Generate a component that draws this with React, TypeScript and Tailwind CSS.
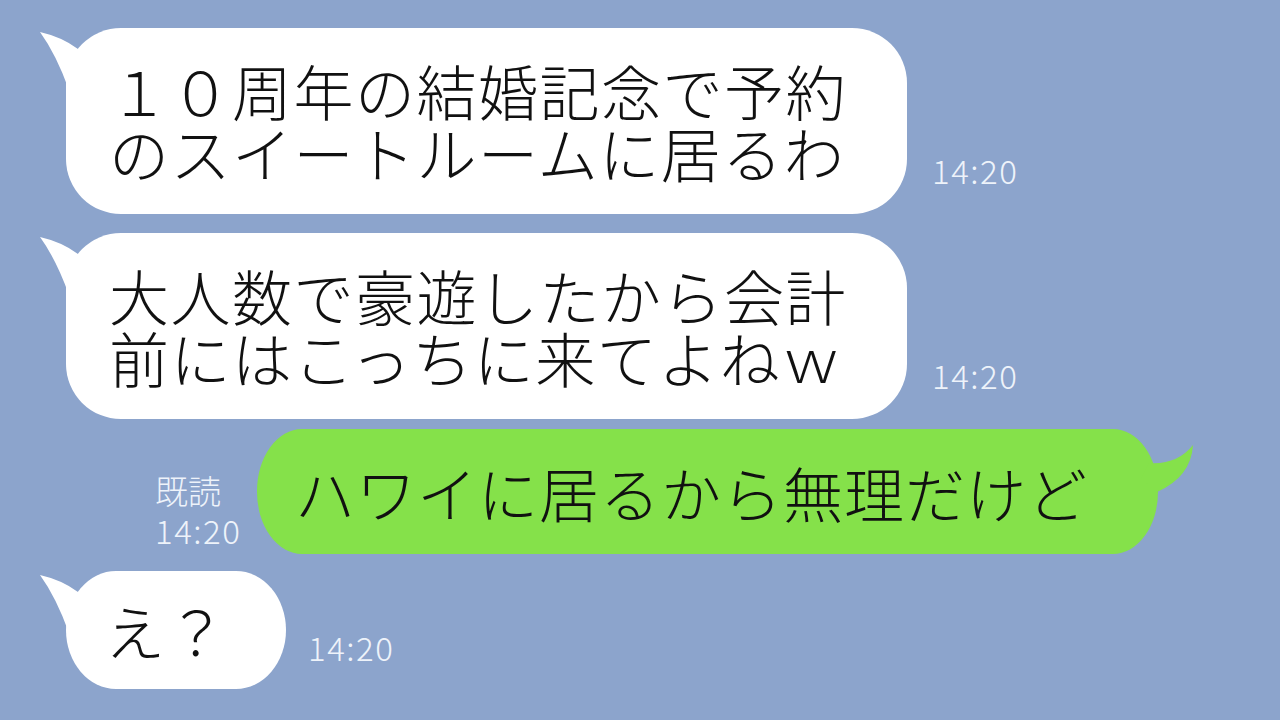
import React from 'react';

// ================================
// Chat data
// ================================

type Message = {
  id: number;
  from: 'them' | 'me';
  lines: string[];
  time: string;
};

const messages: Message[] = [
  { id: 1, from: 'them', lines: ['１０周年の結婚記念で予約', 'のスイートルームに居るわ'], time: '14:20' },
  { id: 2, from: 'them', lines: ['大人数で豪遊したから会計', '前にはこっちに来てよねｗ'], time: '14:20' },
  { id: 3, from: 'me', lines: ['ハワイに居るから無理だけど'], time: '14:20' },
  { id: 4, from: 'them', lines: ['え？'], time: '14:20' },
];

const jpFont = "font-['Noto_Sans_CJK_JP','Noto_Sans',sans-serif]";

// ================================
// Bubble tails
// ================================

const LeftTail: React.FC = () => (
  <svg
    className="absolute left-[-30px] top-0"
    width="60"
    height="70"
    viewBox="0 0 60 70"
  >
    <path d="M4 4 Q26 9 42 21 L52 46 L33 62 Q20 26 4 4 Z" fill="#ffffff" />
  </svg>
);

const RightTail: React.FC = () => (
  <svg
    className="absolute left-[880px] top-0"
    width="60"
    height="80"
    viewBox="0 0 60 80"
  >
    <path d="M12 34 Q40 36 56 16 Q54 48 20 63 L4 50 Z" fill="#85e14a" />
  </svg>
);

// ================================
// Timestamp
// ================================

const Time: React.FC<{ value: string; className?: string }> = ({ value, className = '' }) => (
  <div className={`${jpFont} font-light text-[33px] leading-[30px] tracking-[1.5px] text-[#eef3fa] ${className}`}>
    {value}
  </div>
);

// ================================
// Incoming bubble
// ================================

const IncomingRow: React.FC<{ msg: Message; size: 'big' | 'small'; className?: string }> = ({
  msg,
  size,
  className = '',
}) => {
  const bubbleSize =
    size === 'big'
      ? 'w-[841px] h-[186px] rounded-[55px] pl-[43px]'
      : 'w-[220px] h-[118px] rounded-[50px_/_59px] pl-[39px]';

  return (
    <div className={`flex items-end pl-[66px] ${className}`}>
      <div className={`relative bg-white flex flex-col justify-center ${bubbleSize}`}>
        <LeftTail />
        {msg.lines.map((line) => (
          <p
            key={line}
            className={`${jpFont} font-light text-[60px] leading-[62px] tracking-[1.5px] text-[#111111] whitespace-nowrap`}
          >
            {line}
          </p>
        ))}
      </div>
      <Time value={msg.time} className={size === 'big' ? 'ml-[25px] mb-[29px]' : 'ml-[22px] mb-[27px]'} />
    </div>
  );
};

// ================================
// Outgoing bubble
// ================================

const OutgoingRow: React.FC<{ msg: Message; className?: string }> = ({ msg, className = '' }) => (
  <div className={`flex items-end pl-[155px] ${className}`}>
    <div className="w-[88px] shrink-0 flex flex-col mb-[9px] gap-[10px]">
      <div className={`${jpFont} font-light text-[33px] leading-[30px] text-[#eef3fa]`}>既読</div>
      <Time value={msg.time} />
    </div>
    <div className="relative ml-[14px] w-[901px] h-[125px] rounded-[45px_/_62px] bg-[#85e14a] flex items-center pl-[38px]">
      <RightTail />
      <p className={`${jpFont} font-light text-[60px] leading-[62px] tracking-[1px] text-[#111111] whitespace-nowrap`}>
        {msg.lines[0]}
      </p>
    </div>
  </div>
);

// ================================
// App
// ================================

export default function App() {
  return (
    <div className="w-[1280px] h-[720px] overflow-hidden bg-[#8ca4cc] flex flex-col pt-[28px]">
      <IncomingRow msg={messages[0]} size="big" />
      <IncomingRow msg={messages[1]} size="big" className="mt-[19px]" />
      <OutgoingRow msg={messages[2]} className="mt-[10px]" />
      <IncomingRow msg={messages[3]} size="small" className="mt-[17px]" />
    </div>
  );
}
